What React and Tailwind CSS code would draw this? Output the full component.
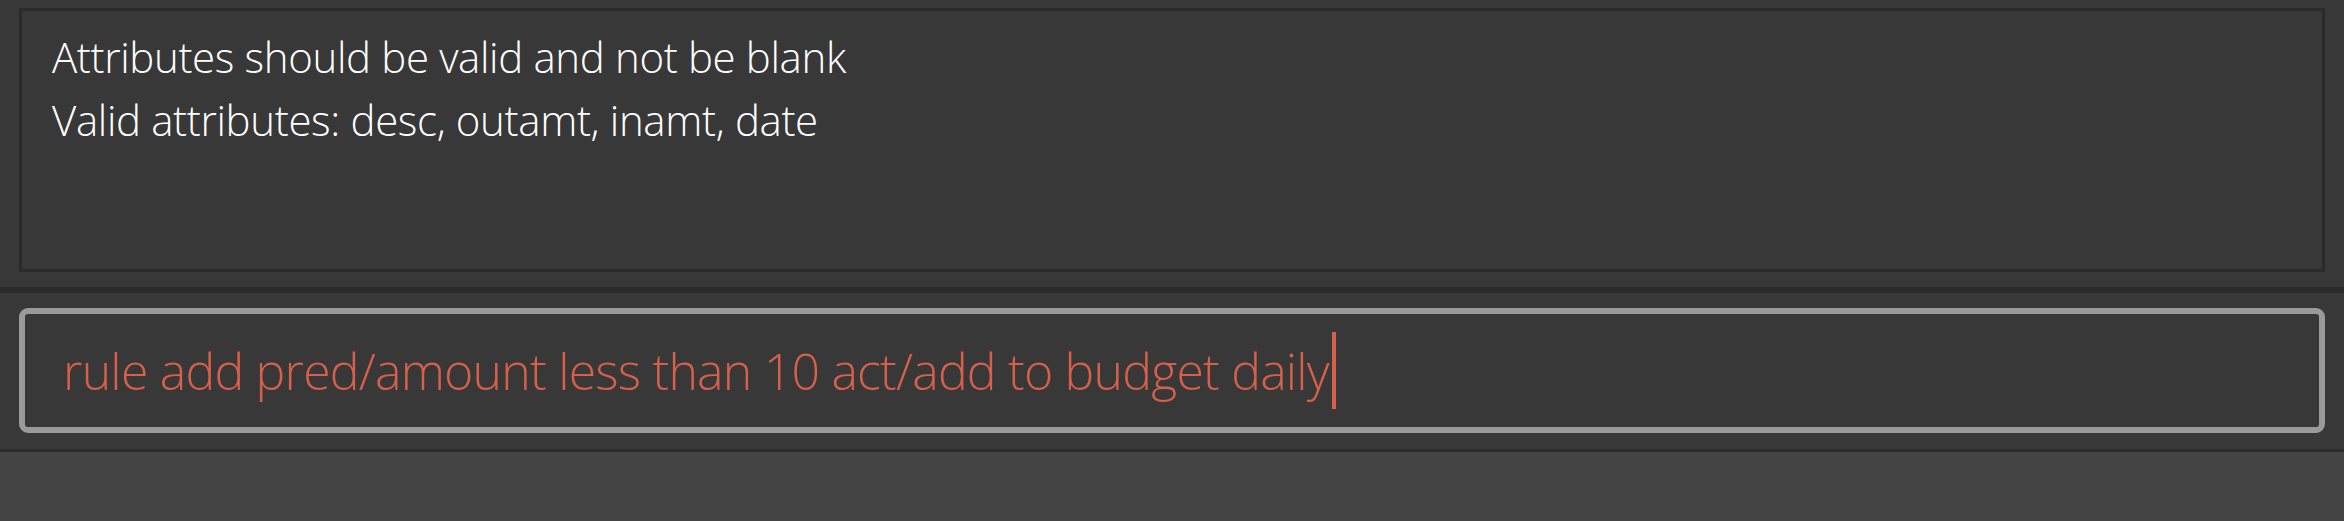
export default function App() {
  return (
    <div className="w-full h-[521px] flex flex-col bg-[#444444] font-['Open_Sans',sans-serif]">
      {/* result display */}
      <div className="h-[287px] bg-[#383838] px-[19px] pt-[8px]">
        <div className="h-[264px] border-[3px] border-[#2a2a2a] bg-[#383838] pl-[30px] pt-[14px] text-white font-light text-[42px] leading-[63px] tracking-[-0.36px]">
          <div>Attributes should be valid and not be blank</div>
          <div>Valid attributes: desc, outamt, inamt, date</div>
        </div>
      </div>
      <div className="h-[6px] bg-[#2b2b2b]" />
      {/* command box */}
      <div className="h-[156px] bg-[#383838] px-[19px] pt-[15px]">
        <div className="h-[125px] rounded-[9px] border-[6px] border-[#9a9a9a] bg-[#383838] pl-[38px] flex items-center">
          <span className="text-[#d6604a] font-light text-[50px] leading-none tracking-[-0.8px] whitespace-nowrap">
            rule add pred/amount less than 10 act/add to budget daily
          </span>
          <span className="w-[4px] h-[77px] bg-[#d6604a] ml-[3px]" />
        </div>
      </div>
      <div className="h-[3px] bg-[#2b2b2b]" />
      <div className="flex-1 bg-[#444444]" />
    </div>
  );
}
